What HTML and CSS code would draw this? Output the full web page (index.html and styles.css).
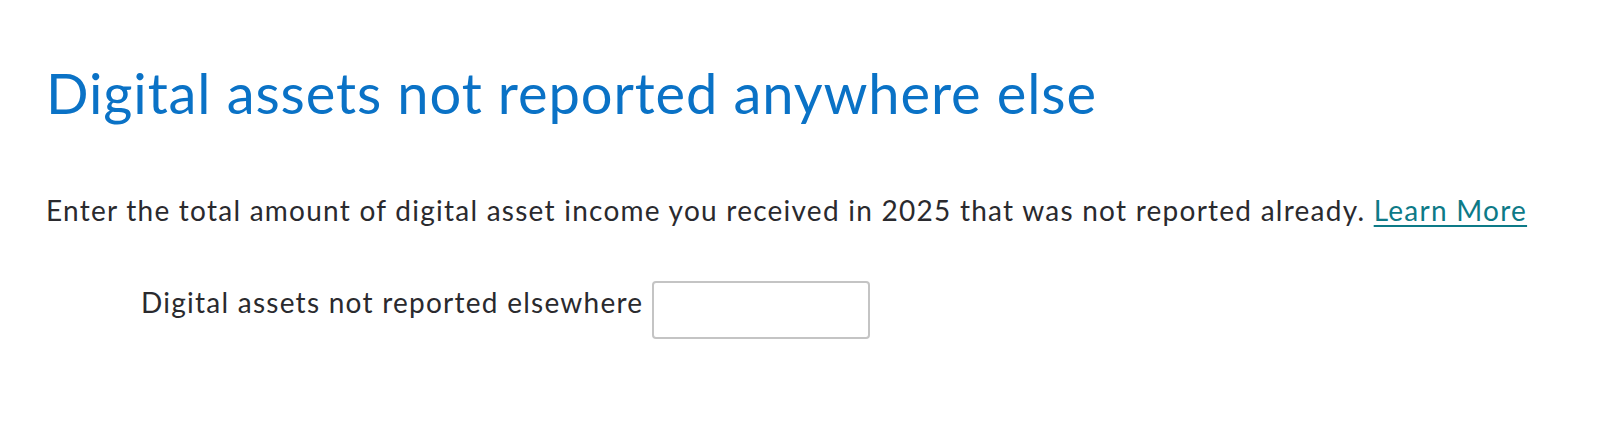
FILE: index.html
```html
<!DOCTYPE html>
<html lang="en">
<head>
    <meta charset="UTF-8">
    <meta name="viewport" content="width=device-width, initial-scale=1.0">
    <title>Digital assets not reported anywhere else</title>
    <link rel="stylesheet" href="styles.css">
</head>
<body>

<div class="page">
    <h1 class="page-title">Digital assets not reported anywhere else</h1>

    <p class="intro">
        Enter the total amount of digital asset income you received in 2025 that was not reported already.
        <a href="#" class="learn-more">Learn More</a>
    </p>

    <div class="field-row">
        <label for="digitalAssets" class="field-label">Digital assets not reported elsewhere</label>
        <input type="text" class="field-input" id="digitalAssets" name="digitalAssets">
    </div>
</div>

</body>
</html>
```

FILE: styles.css
```css
/* Reset dasar */
* {
    margin: 0;
    padding: 0;
    box-sizing: border-box;
}

body {
    background-color: #fff;
    font-family: Lato, "Open Sans", Arial, sans-serif;
    color: #2a2a2e;
}

/* Container utama */
.page {
    padding: 59px 0 0 46px;
}

/* Judul */
.page-title {
    font-size: 56px;
    font-weight: 400;
    line-height: 67px;
    letter-spacing: 0.9px;
    color: #0a72c6;
}

/* Paragraf */
.intro {
    margin-top: 64px;
    font-size: 28px;
    line-height: 40px;
    letter-spacing: 1.25px;
}

.learn-more {
    color: #0d7a87;
    text-decoration: underline;
    text-underline-offset: 4px;
    text-decoration-thickness: 2px;
}

/* Baris input */
.field-row {
    display: flex;
    align-items: flex-start;
    gap: 9px;
    margin-top: 51px;
    padding-left: 95px;
}

.field-label {
    margin-top: 1px;
    font-size: 28px;
    line-height: 40px;
    letter-spacing: 1.25px;
}

.field-input {
    width: 218px;
    height: 58px;
    border: 2px solid #c4c4c4;
    border-radius: 4px;
    font-size: 24px;
    padding: 0 10px;
    outline: none;
}
```
